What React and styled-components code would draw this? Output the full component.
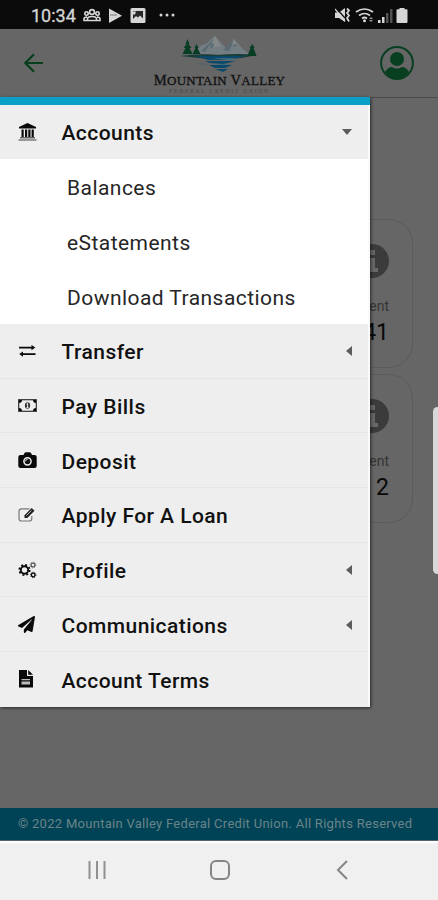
import React from "react";
import styled, { createGlobalStyle } from "styled-components";
import { FaPaperPlane } from "react-icons/fa";

const GlobalStyle = createGlobalStyle`
  * { box-sizing: border-box; }
  body { margin: 0; background: #666; font-family: Roboto, "Liberation Sans", sans-serif; }
`;

const Phone = styled.div`
  position: relative;
  width: 438px;
  height: 900px;
  display: flex;
  flex-direction: column;
  overflow: hidden;
  background: #666;
`;

const StatusBar = styled.div`
  height: 29px;
  flex: none;
  background: #0b0b0b;
  color: #d6d6d6;
  display: flex;
  align-items: center;
  justify-content: space-between;
  padding: 2px 27px 0 31px;
`;
const StatusGroup = styled.div`
  display: flex;
  align-items: center;
`;
const Clock = styled.span`
  width: 52px;
  font-size: 18px;
  line-height: 20px;
  font-weight: 400;
  -webkit-text-stroke: 0.3px #d6d6d6;
`;

const Header = styled.header`
  height: 69px;
  flex: none;
  border-bottom: 1px solid #4b4b4b;
  display: grid;
  grid-template-columns: 1fr 134px 1fr;
  align-items: center;
  padding: 0 24px 0 23px;
`;
const Brand = styled.div`
  align-self: start;
  padding-top: 7px;
  display: flex;
  flex-direction: column;
  align-items: center;
`;
const BrandName = styled.div`
  font-family: "Liberation Serif", serif;
  color: #111;
  font-size: 14.6px;
  line-height: 15px;
  letter-spacing: 0.25px;
  white-space: nowrap;
  -webkit-text-stroke: 0.3px #111;
  margin: -1px 0 0 2px;
`;
const SmallCaps = styled.span`
  font-size: 13px;
`;
const BrandTag = styled.div`
  font-family: "Liberation Serif", serif;
  color: #454545;
  font-size: 5.5px;
  line-height: 6px;
  letter-spacing: 1.8px;
  white-space: nowrap;
  margin-left: 2px;
`;
const AccountButton = styled.div`
  justify-self: end;
  height: 34px;
`;

const Main = styled.main`
  flex: 1;
  padding: 121px 25px 0 10px;
  display: flex;
  flex-direction: column;
  gap: 6px;
`;
const Card = styled.section`
  height: 149px;
  border: 1px solid #5b5b5b;
  border-radius: 24px;
  padding: 24px 23px 0;
  display: flex;
  flex-direction: column;
  align-items: flex-end;
`;
const CardLabel = styled.div`
  margin-top: 18px;
  font-size: 14px;
  line-height: 20px;
  color: #353535;
`;
const CardValue = styled.div`
  margin-top: 3px;
  font-size: 23px;
  line-height: 28px;
  color: #080808;
`;

const Footer = styled.footer`
  height: 33px;
  flex: none;
  background: #004356;
  color: #6a8389;
  font-size: 13px;
  line-height: 32px;
  padding-left: 18px;
  white-space: nowrap;
  letter-spacing: 0.285px;
`;
const NavBar = styled.nav`
  height: 59px;
  flex: none;
  background: #f0f0f0;
  border-top: 2px solid #fff;
  box-shadow: 0 -1px 0 #53656c;
  display: grid;
  grid-template-columns: 124px 126px 12px;
  align-items: center;
  padding: 0 90px 4px 86px;
`;

const Drawer = styled.aside`
  position: absolute;
  top: 97px;
  left: 0;
  width: 370px;
  height: 610px;
  background: #eee;
  box-shadow: 1px 1px 3px rgba(0, 0, 0, 0.6);
  display: flex;
  flex-direction: column;
`;
const DrawerAccent = styled.div`
  height: 8px;
  flex: none;
  background: #08a0c8;
`;
const MenuList = styled.div`
  flex: 1;
  border-right: 2px solid #fafafa;
`;
const MenuRow = styled.div`
  height: ${(p) => (p.$first ? 54 : 54.7)}px;
  display: grid;
  grid-template-columns: ${(p) => (p.$first ? "43.5px 1fr 11px" : "43.5px 1fr 6px")};
  align-items: center;
  padding: ${(p) => (p.$first ? "2px 15px 0 18px" : "3px 16px 0 18px")};
  border-bottom: ${(p) => (p.$line ? 1 : 0)}px solid #e5e5e5;
`;
const MenuIcon = styled.span`
  display: flex;
  width: 20px;
  height: 20px;
  align-items: center;
  color: #0a0a0a;
  margin-top: -3px;
`;
const MenuLabel = styled.span`
  font-size: 21px;
  line-height: 26px;
  font-weight: 500;
  letter-spacing: 0.45px;
  color: #111;
  white-space: nowrap;
`;
const Caret = styled.span`
  justify-self: start;
  margin-top: ${(p) => (p.$open ? -3 : -2)}px;
  border-style: solid;
  border-color: ${(p) => (p.$open ? "#5c5c5c transparent transparent" : "transparent #5c5c5c transparent transparent")};
  border-width: ${(p) => (p.$open ? "6px 5.5px 0" : "5px 6px 5px 0")};
`;
const SubMenu = styled.div`
  background: #fff;
  height: 165px;
  display: flex;
  flex-direction: column;
`;
const SubItem = styled.div`
  flex: 1;
  display: flex;
  align-items: center;
  padding: 3px 0 0 67px;
  color: #262626;
  font-size: 21px;
  font-weight: 400;
  letter-spacing: 0.45px;
`;
const ScrollHandle = styled.div`
  position: absolute;
  left: 433px;
  top: 407px;
  width: 9px;
  height: 167px;
  border-radius: 5px;
  background: #d8d8d8;
`;

const University = () => (
  <svg width="19" height="18" viewBox="0 0 19 18" fill="currentColor">
    <path d="M9.500 0L18 4v1.500H1V4z M3.500 6.500h2.200v7.500H3.500z M7 6.500h2.200v7.500H7z M10.300 6.500h2.200v7.500h-2.200z M13.600 6.500h2.200v7.500h-2.200z" />
    <path d="M2 14h15v1.500H2z" fill="#666" />
    <path d="M.5 16h18v2H.5z" fill="#999" />
  </svg>
);
const Exchange = () => (
  <svg width="18" height="14" viewBox="0 0 18 14" fill="currentColor">
    <path d="M1 2.700h12.500V.9L17.300 3.600l-3.800 2.700V4.500H1z M17.500 9.200H5V7.400L1.200 10.100 5 12.800V11h12.500z" />
  </svg>
);
const Money = () => (
  <svg width="19" height="13" viewBox="0 0 19 13">
    <rect x=".7" y=".7" width="17.600" height="11.600" fill="none" stroke="#303030" strokeWidth="1.200" />
    <path fill="currentColor" d="M1 1h3A3 3 0 0 1 1 4z M15 1H18v3A3 3 0 0 1 15 1z M1 9A3 3 0 0 1 4 12H1z M18 9A3 3 0 0 0 15 12H18z" />
    <ellipse cx="9.500" cy="6.500" rx="2.600" ry="3.300" fill="#333" />
    <path d="M8.600 5l1-.8v4.200M8.500 8.600h2" stroke="#eee" fill="none" />
  </svg>
);
const Camera = () => (
  <svg width="19" height="17" viewBox="0 0 19 17">
    <path d="M2.500 3h3l1-2Q7 .2 8 .2h3.500q1 0 1.500.8l1 2h2.500Q18.700 3 18.700 5v9q0 2-2.200 2h-14Q.3 16 .3 14V5q0-2 2.200-2z" fill="currentColor" />
    <circle cx="9.500" cy="9.300" r="3.600" fill="#111" stroke="#eee" strokeWidth="1.500" />
    <path d="M7.600 9.300q0-1.900 1.900-1.900" fill="none" stroke="#ddd" strokeWidth="1" />
  </svg>
);
const Edit = () => (
  <svg width="18" height="16" viewBox="0 0 18 16" fill="none">
    <path d="M11.500 1.800H3.500Q1 1.800 1 4.300v7.200Q1 14 3.500 14h7.800q2.500 0 2.500-2.500V9" stroke="#777" strokeWidth="1.200" />
    <path d="M6.500 8.200L13.700 1l2.800 2.800L9.300 11H6.500z" fill="#222" />
    <path d="M8.500 8.500l5-5" stroke="#ddd" strokeWidth=".8" />
  </svg>
);
const Cogs = () => (
  <svg width="19" height="18" viewBox="0 0 19 18" fill="none" stroke="currentColor">
    <circle cx="6.500" cy="9" r="3.700" strokeWidth="1.900" />
    <circle cx="6.500" cy="9" r="5.200" strokeWidth="1.700" strokeDasharray="2 2.084" />
    <circle cx="15" cy="4" r="1.900" stroke="#555" strokeWidth="1.200" />
    <circle cx="15" cy="4" r="2.900" stroke="#777" strokeWidth="1" strokeDasharray="1.140 1.138" />
    <circle cx="15.200" cy="14" r="1.800" strokeWidth="1.300" />
    <circle cx="15.200" cy="14" r="2.700" strokeWidth="1" strokeDasharray="1.060 1.060" />
  </svg>
);
const FileText = () => (
  <svg width="16" height="18" viewBox="0 0 16 18">
    <path d="M1 0h8v6h6v11.500H1z M10.200 0L15 4.800h-4.800z" fill="currentColor" />
    <path d="M3.500 9h8.500v1.200H3.500z M3.500 11.500h8.500v3H3.500z" fill="#bdbdbd" />
  </svg>
);

const items = [
  { label: "Transfer", icon: <Exchange />, caret: true },
  { label: "Pay Bills", icon: <Money /> },
  { label: "Deposit", icon: <Camera /> },
  { label: "Apply For A Loan", icon: <Edit /> },
  { label: "Profile", icon: <Cogs />, caret: true },
  { label: "Communications", icon: <FaPaperPlane size={17} />, caret: true },
  { label: "Account Terms", icon: <FileText /> },
];

const NotificationIcons = () => (
  <svg width="94" height="18" viewBox="0 0 94 18" fill="currentColor">
    <g fill="none" stroke="currentColor" strokeWidth="1.600">
      <circle cx="9" cy="5" r="2.400" /><circle cx="3.500" cy="6.500" r="1.700" /><circle cx="14.500" cy="6.500" r="1.700" />
      <path d="M4.500 13.500V12q0-2.500 4.500-2.500t4.500 2.500v1.500z M4 10q-3 0-3 2v1.500h3 M14 10q3 0 3 2v1.500h-3" />
    </g>
    <path d="M26 1.500v14.500l13-7.250z" />
    <path d="M27 8h7" stroke="#777" />
    <path d="M49 1h12q1.500 0 1.500 1.500v12Q62.500 16 61 16H49q-1.500 0-1.500-1.500v-12Q47.500 1 49 1z" />
    <path d="M50 4h10v7.500l-3-3-2 2-2-1.500-3 3z" fill="#282828" />
    <path d="M50 4.500h3l-1 3h-2z" fill="#d6d6d6" />
    <circle cx="78" cy="8" r="1.500" /><circle cx="84" cy="8" r="1.500" /><circle cx="90" cy="8" r="1.500" />
  </svg>
);
const SystemIcons = () => (
  <svg width="76" height="18" viewBox="0 0 76 18" fill="currentColor">
    <path d="M0 5.500h4L10 1v14L4 11H0z" />
    <path d="M.5 .5L10 11" stroke="#0b0b0b" strokeWidth="1.200" />
    <path d="M0 2l10 12" stroke="currentColor" strokeWidth="1.200" />
    <path d="M12 1.500l2 2-2 2.500 2 2.500-2 2.500 2 3.500" fill="none" stroke="currentColor" strokeWidth="1.800" />
    <g fill="none" stroke="currentColor" strokeWidth="1.700">
      <path d="M21 5q8.500-6 17 0M24 8.500q5.500-4 11 0M27 11.500q2.500-2 5 0" />
    </g>
    <circle cx="29.500" cy="13.700" r="1.500" />
    <path d="M34 12l2-2 2 2z M34 13l2 2 2-2z" opacity=".7" />
    <path d="M43 13h2.500v3H43z M47 10h2.500v6H47z" />
    <path d="M51 6h2.500v10H51z M55 2h2.500v14H55z" opacity=".35" />
    <path d="M64.500 2.200V1h5v1.200h2q1 0 1 1V15q0 1-1 1h-9q-1 0-1-1V3.200q0-1 1-1z" />
  </svg>
);
const BackArrow = () => (
  <svg width="21" height="20" viewBox="0 0 21 20" fill="none" stroke="#073f1e" strokeWidth="2.200">
    <path d="M20 10H2.500M11 1.300L2.300 10l8.700 8.700" />
  </svg>
);
const MountainLogo = () => (
  <svg width="82" height="38" viewBox="0 0 82 38">
    <path d="M14 18L24 9l4-1 9-8 7 8 4 4 8-9 8 9 8 7z" fill="#747e82" />
    <path d="M23 15L37 2l6 8-6-3-4 6-1-5-5 8M45 14l11-10 3 7-5-2-3 6" fill="#596a73" />
    <path d="M37 0l-4 9 3-2 1 4 6-1M56 3l-2 6 4-1 3 5" fill="#83898b" />
    <path d="M2 20q20-3 38-1 22-2 39 0l-16 3-20 1 3 1-25-2z" fill="#183e3b" />
    <path d="M19 20h47l-9 3-27 1zM27 25h31l-13 3-13-1zM31 29h23l-7 3H37zM37 33h13l-5 3z" fill="#0b496b" />
    <path d="M33 22h27l-10 2zM37 28h16l-8 1z" fill="#376c83" />
    <path d="M18 28q5-2 12 0l-5 1z" fill="#53636b" />
    <path d="M9.500 3l2 5h-1l3 4h-2l3 6H4.500l3-6h-2l3-4h-1zM18.500 8l2 4h-1l3 6h-8l3-6h-1zM74.500 8l2 4h-1l3 8h-9l3-8h-1z" fill="#063d23" />
  </svg>
);
const Avatar = () => (
  <svg width="34" height="34" viewBox="0 0 34 34">
    <circle cx="17" cy="17" r="15.900" fill="none" stroke="#083f20" strokeWidth="2" />
    <circle cx="17" cy="13" r="7" fill="#083f20" />
    <path d="M5 26q3-5 7-5 5 3 10 0 4 0 7 5-5 6.500-12 6.500T5 26z" fill="#083f20" />
  </svg>
);
const Info = () => (
  <svg width="34" height="34" viewBox="0 0 34 34">
    <circle cx="17" cy="17" r="17" fill="#3b3b3b" />
    <path d="M14 6h6v5h-6z M12 14h8v10h3v4H11v-4h3v-6h-2z" fill="#686868" />
  </svg>
);

export default function App() {
  return (
    <Phone>
      <GlobalStyle />
      <StatusBar>
        <StatusGroup><Clock>10:34</Clock><NotificationIcons /></StatusGroup>
        <StatusGroup><SystemIcons /></StatusGroup>
      </StatusBar>
      <Header>
        <BackArrow />
        <Brand>
          <MountainLogo />
          <BrandName>M<SmallCaps>OUNTAIN</SmallCaps> V<SmallCaps>ALLEY</SmallCaps></BrandName>
          <BrandTag>FEDERAL CREDIT UNION</BrandTag>
        </Brand>
        <AccountButton><Avatar /></AccountButton>
      </Header>
      <Main>
        <Card><Info /><CardLabel>Current</CardLabel><CardValue>41</CardValue></Card>
        <Card><Info /><CardLabel>Current</CardLabel><CardValue>2</CardValue></Card>
      </Main>
      <Footer>© 2022 Mountain Valley Federal Credit Union. All Rights Reserved</Footer>
      <NavBar>
        <svg width="20" height="20" viewBox="0 0 20 20" fill="none" stroke="#909090" strokeWidth="2"><path d="M3.500 1v18M11 1v18M18.500 1v18" /></svg>
        <svg width="20" height="20" viewBox="0 0 20 20" fill="none" stroke="#858585" strokeWidth="2"><rect x="1" y="1" width="18" height="18" rx="5" /></svg>
        <svg width="12" height="20" viewBox="0 0 12 20" fill="none" stroke="#858585" strokeWidth="2"><path d="M11 1L2 10l9 9" /></svg>
      </NavBar>
      <ScrollHandle />
      <Drawer>
        <DrawerAccent />
        <MenuList>
          <MenuRow $first>
            <MenuIcon><University /></MenuIcon><MenuLabel>Accounts</MenuLabel><Caret $open />
          </MenuRow>
          <SubMenu>
            <SubItem>Balances</SubItem><SubItem>eStatements</SubItem><SubItem>Download Transactions</SubItem>
          </SubMenu>
          {items.map((item, i) => (
            <MenuRow key={item.label} $line={i < items.length - 1}>
              <MenuIcon>{item.icon}</MenuIcon><MenuLabel>{item.label}</MenuLabel>{item.caret && <Caret />}
            </MenuRow>
          ))}
        </MenuList>
      </Drawer>
    </Phone>
  );
}
